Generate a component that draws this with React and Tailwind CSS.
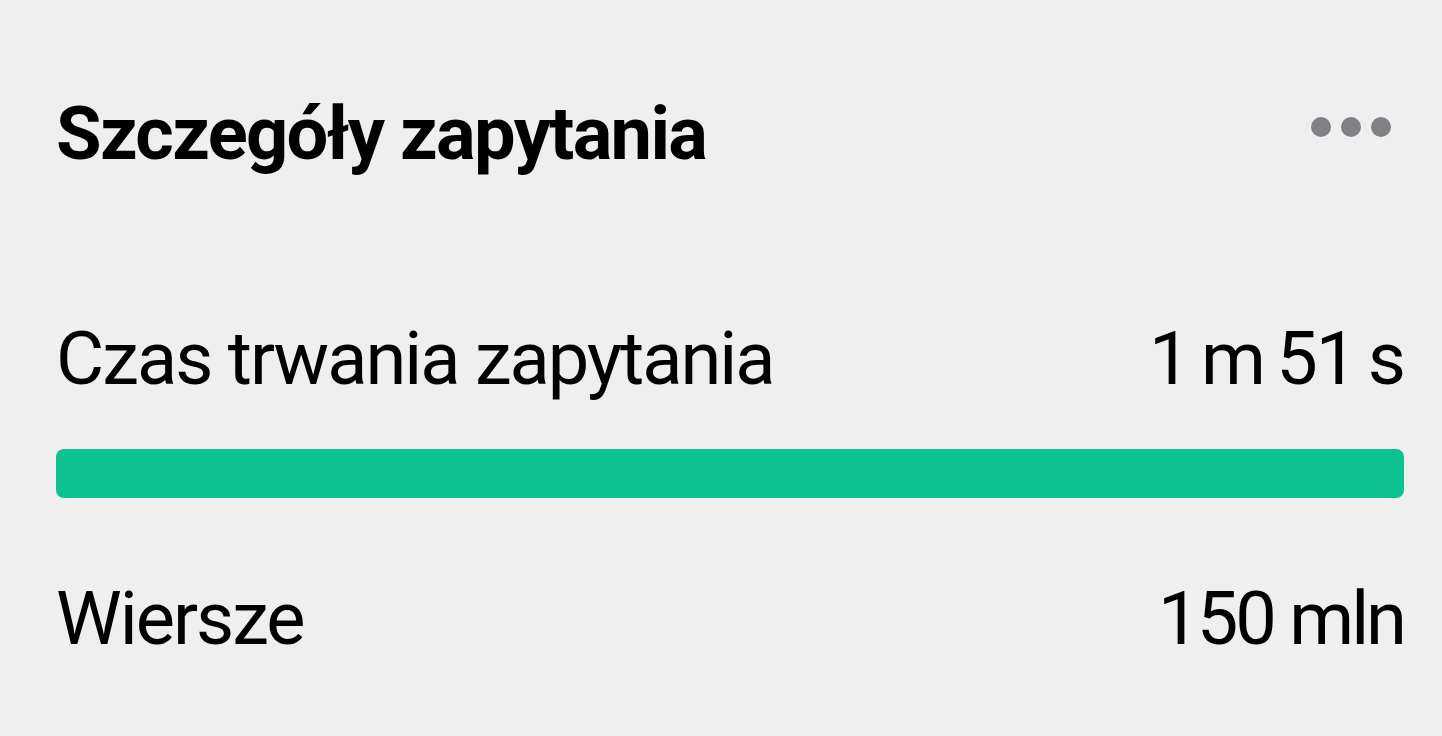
export default function App() {
  return (
    <div className="w-[1442px] h-[736px] bg-[#efefef] pl-[56px] pr-[38px] text-black overflow-hidden" style={{ fontFamily: 'Roboto, "Liberation Sans", Arial, sans-serif' }}>
      <div className="flex items-center justify-between pt-[97px]">
        <h1 className="text-[74px] leading-none font-bold tracking-[-1.65px]">Szczegóły zapytania</h1>
        <div className="flex gap-[10px] pr-[13px] mb-[14px]">
          <span className="w-[20px] h-[20px] rounded-full bg-[#808185]" />
          <span className="w-[20px] h-[20px] rounded-full bg-[#808185]" />
          <span className="w-[20px] h-[20px] rounded-full bg-[#808185]" />
        </div>
      </div>
      <div className="flex items-end justify-between mt-[151px] text-[74px] leading-none tracking-[-2px]">
        <span>Czas trwania zapytania</span>
        <span className="[word-spacing:-4px]">1 m 51 s</span>
      </div>
      <div className="mt-[53px] h-[49px] rounded-[8px] bg-[#0bc290]" />
      <div className="flex items-end justify-between mt-[84px] text-[74px] leading-none tracking-[-2px]">
        <span>Wiersze</span>
        <span className="tracking-[-3px]">150 mln</span>
      </div>
    </div>
  );
}
